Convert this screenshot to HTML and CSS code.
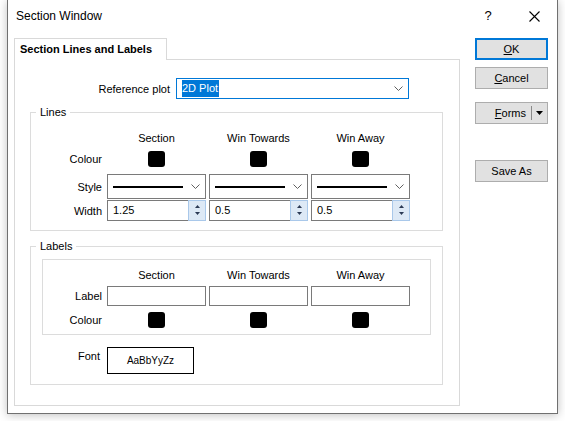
FILE: index.html
```html
<!DOCTYPE html>
<html>
<head>
<meta charset="utf-8">
<link rel="stylesheet" href="styles.css">
</head>
<body>
<div class="window">
  <div class="titlebar">
    <span class="title">Section Window</span>
    <span class="tb-btn help">?</span>
    <span class="tb-btn">
      <svg width="11" height="11" viewBox="0 0 11 11"><path d="M0.5 0.5L10.5 10.5M10.5 0.5L0.5 10.5" stroke="#000" stroke-width="1.1" fill="none"/></svg>
    </span>
  </div>
  <div class="body">
    <div class="tabs">
      <div class="tab">Section Lines and Labels</div>
      <div class="panel">
        <div class="refrow">
          <span>Reference plot</span>
          <div class="combo ref">
            <span class="sel">2D Plot</span>
            <svg class="chev" width="9" height="5" viewBox="0 0 9 5"><path d="M0.5 0.5L4.5 4.5L8.5 0.5" stroke="#606060" fill="none"/></svg>
          </div>
        </div>

        <fieldset class="group lines">
          <legend>Lines</legend>
          <div class="row hdr-row">
            <span></span><span class="hdr">Section</span><span class="hdr">Win Towards</span><span class="hdr">Win Away</span>
          </div>
          <div class="row colour-row">
            <span class="lbl">Colour</span><span class="sw"></span><span class="sw"></span><span class="sw"></span>
          </div>
          <div class="row style-row">
            <span class="lbl">Style</span>
            <div class="lcombo"><span class="line"></span><svg class="chev" width="9" height="5" viewBox="0 0 9 5"><path d="M0.5 0.5L4.5 4.5L8.5 0.5" stroke="#606060" fill="none"/></svg></div>
            <div class="lcombo"><span class="line"></span><svg class="chev" width="9" height="5" viewBox="0 0 9 5"><path d="M0.5 0.5L4.5 4.5L8.5 0.5" stroke="#606060" fill="none"/></svg></div>
            <div class="lcombo"><span class="line"></span><svg class="chev" width="9" height="5" viewBox="0 0 9 5"><path d="M0.5 0.5L4.5 4.5L8.5 0.5" stroke="#606060" fill="none"/></svg></div>
          </div>
          <div class="row width-row">
            <span class="lbl">Width</span>
            <div class="spin"><span class="val">1.25</span><span class="btns"><svg width="5" height="3" viewBox="0 0 5 3"><path d="M2.5 0L5 3H0Z" fill="#2b3a55"/></svg><svg width="5" height="3" viewBox="0 0 5 3"><path d="M0 0H5L2.5 3Z" fill="#2b3a55"/></svg></span></div>
            <div class="spin"><span class="val">0.5</span><span class="btns"><svg width="5" height="3" viewBox="0 0 5 3"><path d="M2.5 0L5 3H0Z" fill="#2b3a55"/></svg><svg width="5" height="3" viewBox="0 0 5 3"><path d="M0 0H5L2.5 3Z" fill="#2b3a55"/></svg></span></div>
            <div class="spin"><span class="val">0.5</span><span class="btns"><svg width="5" height="3" viewBox="0 0 5 3"><path d="M2.5 0L5 3H0Z" fill="#2b3a55"/></svg><svg width="5" height="3" viewBox="0 0 5 3"><path d="M0 0H5L2.5 3Z" fill="#2b3a55"/></svg></span></div>
          </div>
        </fieldset>

        <fieldset class="group labels">
          <legend>Labels</legend>
          <div class="inner">
            <div class="row2 hdr-row2">
              <span></span><span class="hdr">Section</span><span class="hdr">Win Towards</span><span class="hdr">Win Away</span>
            </div>
            <div class="row2 label-row">
              <span class="lbl">Label</span><span class="lbox"></span><span class="lbox"></span><span class="lbox"></span>
            </div>
            <div class="row2 colour-row2">
              <span class="lbl">Colour</span><span class="sw"></span><span class="sw"></span><span class="sw"></span>
            </div>
          </div>
          <div class="fontrow">
            <span class="lbl font-lbl">Font</span>
            <div class="fontbox">AaBbYyZz</div>
          </div>
        </fieldset>
      </div>
    </div>
    <div class="buttons">
      <div class="btn ok"><span><u>O</u>K</span></div>
      <div class="btn cancel"><span><u>C</u>ancel</span></div>
      <div class="btn forms">
        <span class="ftxt"><u>F</u>orms</span>
        <span class="fsep"></span>
        <span class="farrow"><svg width="7" height="4" viewBox="0 0 7 4"><path d="M0 0H7L3.5 4Z" fill="#000"/></svg></span>
      </div>
      <div class="btn saveas"><span>Save As</span></div>
    </div>
  </div>
</div>
</body>
</html>
```

FILE: styles.css
```css
* { box-sizing: border-box; }
html, body { margin: 0; padding: 0; }
body {
  width: 565px;
  height: 421px;
  overflow: hidden;
  background: #fff;
  font-family: "Liberation Sans", Arial, sans-serif;
  font-size: 11px;
  color: #000;
}
.window {
  margin-left: 7px;
  width: 551px;
  height: 414px;
  border: 1px solid #707070;
  border-top: none;
  background: #fff;
  box-shadow: 0 1px 9px rgba(0, 0, 0, 0.25);
  display: flex;
  flex-direction: column;
}
.titlebar {
  height: 32px;
  display: flex;
  align-items: center;
  padding-left: 8px;
}
.title { flex: 1; font-size: 12px; }
.tb-btn {
  width: 46px;
  height: 32px;
  display: flex;
  align-items: center;
  justify-content: center;
}
.help { font-size: 13px; padding-bottom: 2px; }
.body {
  display: flex;
  padding-top: 6px;
  padding-left: 6px;
}
.tabs { display: flex; flex-direction: column; align-items: flex-start; }
.tab {
  position: relative;
  z-index: 1;
  width: 153px;
  height: 22px;
  margin-bottom: -1px;
  padding-left: 5px;
  border: 1px solid #d9d9d9;
  border-bottom: none;
  background: #fff;
  font-weight: bold;
  line-height: 21px;
}
.panel {
  width: 446px;
  height: 347px;
  border: 1px solid #d9d9d9;
  padding: 18px 0 0 15px;
}
.refrow {
  display: flex;
  justify-content: flex-end;
  align-items: center;
  gap: 6px;
  padding-right: 50px;
}
.combo.ref {
  width: 233px;
  height: 21px;
  border: 1px solid #0078d7;
  display: flex;
  align-items: center;
  padding-left: 5px;
}
.sel {
  background: #0078d7;
  color: #fff;
  height: 17px;
  line-height: 17px;
  padding-right: 1px;
}
.chev { margin-left: auto; margin-right: 5px; }

fieldset.group {
  margin: 6px 0 0 0;
  padding: 0;
  width: 413px;
  border: 1px solid #dcdcdc;
}
fieldset.group legend {
  margin-left: 5px;
  padding: 0 4px;
  line-height: 14px;
}
.row {
  display: grid;
  grid-template-columns: 73px 99px 99px 99px;
  column-gap: 3px;
  align-items: center;
}
.hdr { text-align: center; line-height: 14px; }
.lbl { text-align: right; padding-right: 2px; line-height: 14px; }
.hdr-row { margin-top: 12px; }
.colour-row { margin-top: 6px; height: 16px; }
.style-row { margin-top: 7px; }
.width-row { margin-top: 1px; margin-bottom: 9px; }
.sw {
  justify-self: center;
  width: 17px;
  height: 16px;
  background: #000;
  border-radius: 3px;
}
.lcombo {
  height: 25px;
  border: 1px solid #7a7a7a;
  display: flex;
  align-items: center;
  padding-left: 5px;
}
.line { width: 70px; height: 2px; background: #000; }
.lcombo .chev { margin-right: 5px; }
.spin {
  height: 21px;
  border: 1px solid #7a7a7a;
  display: flex;
}
.spin .val { flex: 1; padding-left: 5px; line-height: 19px; }
.spin .btns {
  width: 18px;
  margin: -1px -1px -1px 0;
  border: 1px solid #a9c8ea;
  background: #dde9f6;
  display: flex;
  flex-direction: column;
  align-items: center;
  justify-content: space-between;
  padding: 4px 0 5px;
}

fieldset.labels { margin-top: 8px; }
.inner {
  margin: 6px 0 0 11px;
  width: 389px;
  border: 1px solid #dcdcdc;
  padding: 8px 0 6px 0;
}
.row2 {
  display: grid;
  grid-template-columns: 61px 99px 99px 99px;
  column-gap: 3px;
  align-items: center;
}
.label-row { margin-top: 4px; }
.colour-row2 { margin-top: 6px; height: 16px; }
.lbox { height: 20px; border: 1px solid #7a7a7a; background: #fff; }
.fontrow {
  display: grid;
  grid-template-columns: 73px 87px;
  column-gap: 3px;
  margin-top: 12px;
  margin-bottom: 10px;
}
.font-lbl { padding-top: 2px; padding-right: 4px; }
.fontbox {
  height: 27px;
  border: 1px solid #000;
  display: flex;
  align-items: center;
  justify-content: center;
  font-size: 10px;
}

.buttons {
  margin-left: 15px;
  display: flex;
  flex-direction: column;
}
.btn {
  width: 73px;
  height: 22px;
  background: #e1e1e1;
  border: 1px solid #adadad;
  display: flex;
  align-items: center;
  justify-content: center;
}
.btn.ok { border: 2px solid #0078d7; }
.btn.cancel { margin-top: 7px; }
.btn.forms { margin-top: 13px; justify-content: flex-end; }
.ftxt { margin-right: 5px; }
.fsep { width: 1px; height: 14px; background: #8a8a8a; }
.farrow { width: 15px; display: flex; justify-content: center; }
.btn.saveas { margin-top: 36px; }
```
